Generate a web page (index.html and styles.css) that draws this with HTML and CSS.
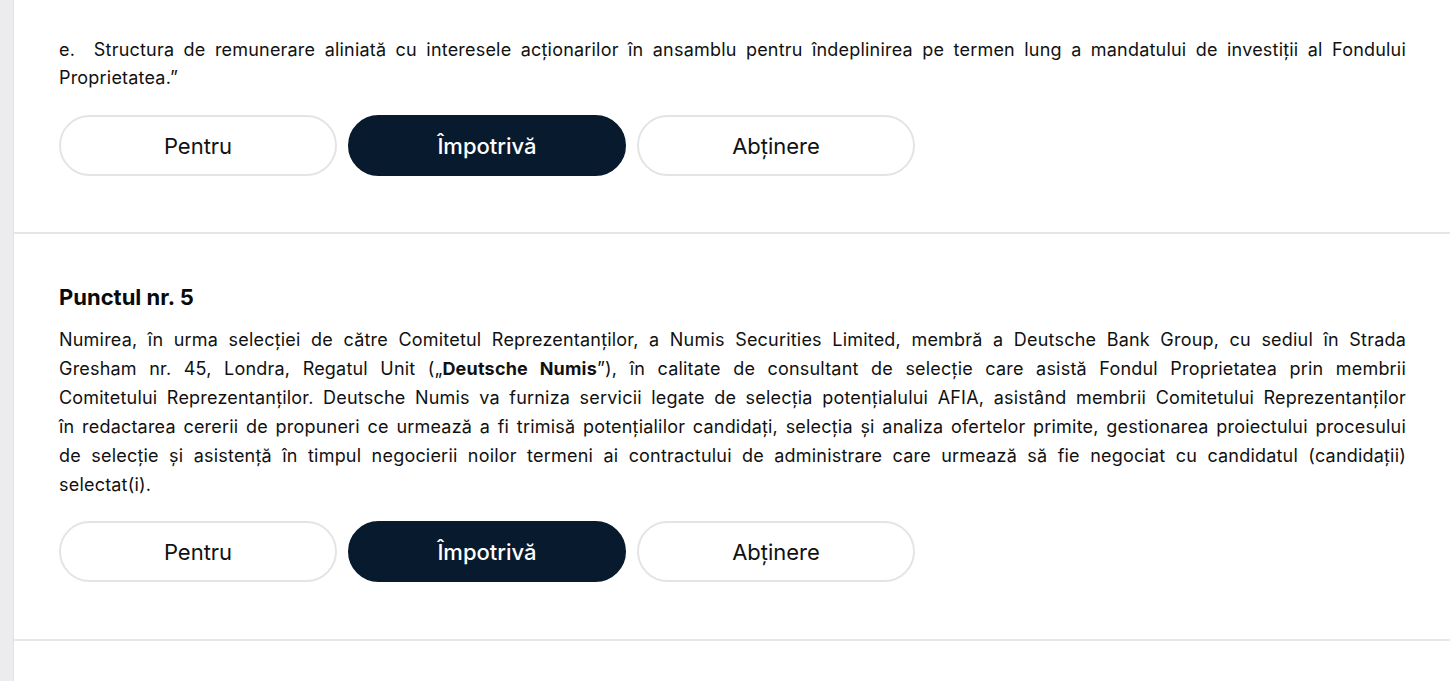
FILE: index.html
```html
<!DOCTYPE html>
<html lang="ro">
<head>
<meta charset="utf-8">
<title>Vot</title>
<link rel="stylesheet" href="styles.css">
</head>
<body>
<div class="layout">
  <aside class="strip"></aside>
  <main class="content">
    <section class="item item-first">
      <p class="text text-tight">
        <span class="line">e.&nbsp; Structura de remunerare aliniată cu interesele acționarilor în ansamblu pentru îndeplinirea pe termen lung a mandatului de investiții al Fondului</span>
        <span class="line last">Proprietatea.”</span>
      </p>
      <div class="choices">
        <button class="choice">Pentru</button>
        <button class="choice active">Împotrivă</button>
        <button class="choice">Abținere</button>
      </div>
    </section>
    <section class="item item-second">
      <h2 class="title">Punctul nr. 5</h2>
      <p class="text">
        <span class="line">Numirea, în urma selecției de către Comitetul Reprezentanților, a Numis Securities Limited, membră a Deutsche Bank Group, cu sediul în Strada</span>
        <span class="line">Gresham nr. 45, Londra, Regatul Unit („<strong>Deutsche Numis</strong>”), în calitate de consultant de selecție care asistă Fondul Proprietatea prin membrii</span>
        <span class="line">Comitetului Reprezentanților. Deutsche Numis va furniza servicii legate de selecția potențialului AFIA, asistând membrii Comitetului Reprezentanților</span>
        <span class="line">în redactarea cererii de propuneri ce urmează a fi trimisă potențialilor candidați, selecția și analiza ofertelor primite, gestionarea proiectului procesului</span>
        <span class="line">de selecție și asistență în timpul negocierii noilor termeni ai contractului de administrare care urmează să fie negociat cu candidatul (candidații)</span>
        <span class="line last">selectat(i).</span>
      </p>
      <div class="choices">
        <button class="choice">Pentru</button>
        <button class="choice active">Împotrivă</button>
        <button class="choice">Abținere</button>
      </div>
    </section>
  </main>
</div>
</body>
</html>
```
FILE: styles.css
```css
html, body {
  margin: 0;
  padding: 0;
  background: #ffffff;
}
body {
  font-family: Inter, "Noto Sans", "Liberation Sans", sans-serif;
  color: #111111;
  height: 681px;
  overflow: hidden;
}
.layout {
  display: flex;
  min-height: 681px;
}
.strip {
  width: 13px;
  flex: 0 0 13px;
  background: #ececee;
  border-right: 1px solid #e2e2e4;
}
.content {
  width: 1436px;
  flex: 0 0 1436px;
}
.item {
  padding: 49px 44px 56px 45px;
  border-bottom: 2px solid #e6e6e7;
}
.item-first {
  padding-top: 36px;
}
.item-second {
  padding-bottom: 57px;
}
.title {
  margin: 0 0 14px;
  font-size: 22px;
  line-height: 28px;
  font-weight: 700;
  color: #0a0a0a;
}
.text {
  margin: 0;
  font-size: 18px;
  line-height: 29px;
  letter-spacing: 0.2px;
}
.text-tight {
  line-height: 28px;
}
.line {
  display: block;
  white-space: nowrap;
  text-align: justify;
  text-align-last: justify;
}
.line.last {
  text-align: left;
  text-align-last: left;
}
.text strong {
  font-weight: 700;
}
.choices {
  display: flex;
  gap: 11px;
  margin-top: 23px;
}
.item-second .choices {
  margin-top: 22px;
}
.choice {
  width: 278px;
  height: 61px;
  box-sizing: border-box;
  border: 2px solid #e4e4e5;
  border-radius: 31px;
  background: #ffffff;
  color: #111111;
  font-family: Inter, "Noto Sans", sans-serif;
  font-size: 22px;
  font-weight: 400;
  padding: 0;
}
.choice.active {
  background: #081a2d;
  border-color: #081a2d;
  color: #ffffff;
  font-weight: 500;
}
```
